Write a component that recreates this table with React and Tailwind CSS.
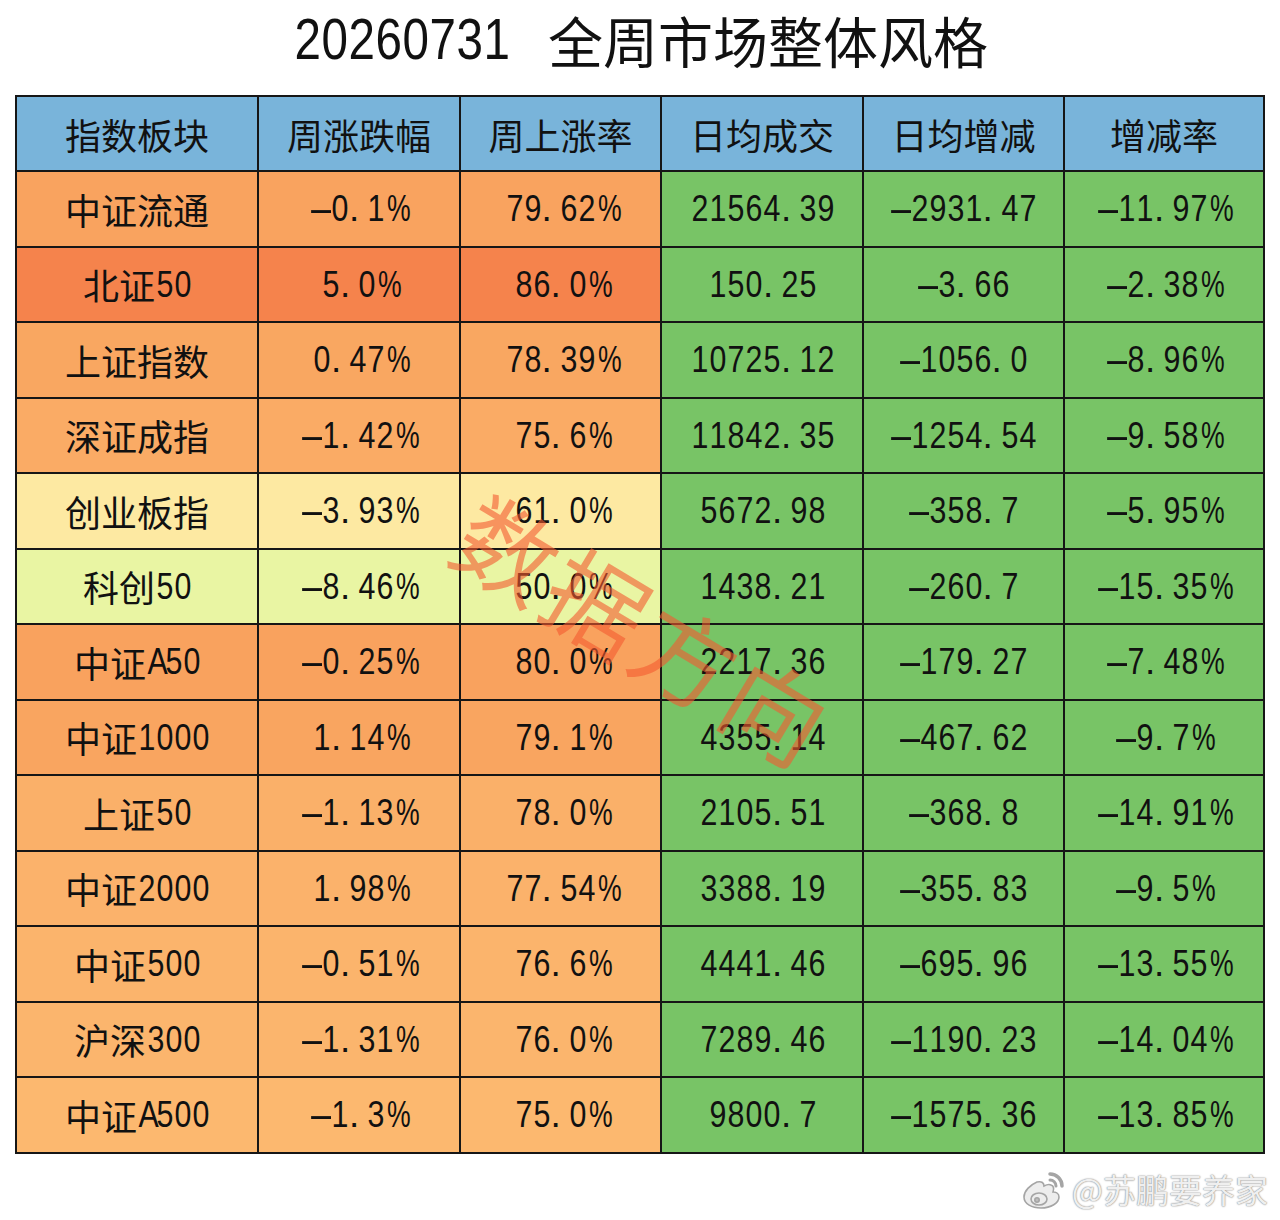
import React from 'react';

// --- table data ---
const rows = [
  { name: '中证流通', chg: '-0.1%', up: '79.62%', vol: '21564.39', diff: '-2931.47', rate: '-11.97%', bg: 'bg-[#f9a35f]' },
  { name: '北证50', chg: '5.0%', up: '86.0%', vol: '150.25', diff: '-3.66', rate: '-2.38%', bg: 'bg-[#f5834c]' },
  { name: '上证指数', chg: '0.47%', up: '78.39%', vol: '10725.12', diff: '-1056.0', rate: '-8.96%', bg: 'bg-[#f9a761]' },
  { name: '深证成指', chg: '-1.42%', up: '75.6%', vol: '11842.35', diff: '-1254.54', rate: '-9.58%', bg: 'bg-[#faab65]' },
  { name: '创业板指', chg: '-3.93%', up: '61.0%', vol: '5672.98', diff: '-358.7', rate: '-5.95%', bg: 'bg-[#fde9a2]' },
  { name: '科创50', chg: '-8.46%', up: '50.0%', vol: '1438.21', diff: '-260.7', rate: '-15.35%', bg: 'bg-[#e9f5a3]' },
  { name: '中证A50', chg: '-0.25%', up: '80.0%', vol: '2217.36', diff: '-179.27', rate: '-7.48%', bg: 'bg-[#f9a25e]' },
  { name: '中证1000', chg: '1.14%', up: '79.1%', vol: '4355.14', diff: '-467.62', rate: '-9.7%', bg: 'bg-[#f9a560]' },
  { name: '上证50', chg: '-1.13%', up: '78.0%', vol: '2105.51', diff: '-368.8', rate: '-14.91%', bg: 'bg-[#fab069]' },
  { name: '中证2000', chg: '1.98%', up: '77.54%', vol: '3388.19', diff: '-355.83', rate: '-9.5%', bg: 'bg-[#fbb26b]' },
  { name: '中证500', chg: '-0.51%', up: '76.6%', vol: '4441.46', diff: '-695.96', rate: '-13.55%', bg: 'bg-[#fbb46c]' },
  { name: '沪深300', chg: '-1.31%', up: '76.0%', vol: '7289.46', diff: '-1190.23', rate: '-14.04%', bg: 'bg-[#fbb56d]' },
  { name: '中证A500', chg: '-1.3%', up: '75.0%', vol: '9800.7', diff: '-1575.36', rate: '-13.85%', bg: 'bg-[#fcb86f]' },
];

const headers = ['指数板块', '周涨跌幅', '周上涨率', '日均成交', '日均增减', '增减率'];

// half-width latin glyphs like the original heiti font: fixed box, squeezed glyph
function Txt({ s }) {
  return s.split('').map((c, i) => {
    if (/[\u4e00-\u9fff]/.test(c)) return <span key={i}>{c}</span>;
    if (c === '.') return <span key={i} className="inline-block w-[18px] pl-[1px] text-left font-['Liberation_Sans',sans-serif] text-[37px]">.</span>;
    if (c === '-') return <span key={i} className="inline-block w-[18px] text-center font-['Liberation_Sans',sans-serif] text-[37px] scale-x-[2.2]">-</span>;
    if (c === '%') return <span key={i} className="inline-block w-[22px] text-center font-['Liberation_Sans',sans-serif] text-[37px] scale-x-[0.72]">%</span>;
    return <span key={i} className="inline-block w-[18px] text-center font-['Liberation_Sans',sans-serif] text-[37px] scale-x-[0.82]">{c}</span>;
  });
}

function Cell({ children, className }) {
  return (
    <div className={`flex items-center justify-center h-[73.5px] text-[36px] text-[#111] leading-none ${className}`}>
      {children}
    </div>
  );
}

function WeiboLogo() {
  return (
    <svg width="46" height="40" viewBox="0 0 46 40">
      <g fill="#ededed" stroke="#a5a5a5" strokeWidth="1.6">
        <path d="M17 12c-7 3-13 9-13 15 0 7 8 11 17 11 10 0 18-5 18-11 0-4-4-5-6-5 1-3 1-6-2-7-2-1-5 0-7 1 0-3-2-5-7-4z" />
        <ellipse cx="19" cy="29" rx="8" ry="6" />
        <circle cx="17" cy="30" r="2.2" fill="#bdbdbd" />
        <path d="M30 4a12 12 0 0 1 12 12" fill="none" strokeWidth="3.5" strokeLinecap="round" />
        <path d="M30 10a6 6 0 0 1 6 6" fill="none" strokeWidth="3" strokeLinecap="round" />
      </g>
    </svg>
  );
}

export default function App() {
  return (
    <div className="relative w-[1280px] h-[1220px] bg-white font-['Noto_Sans_CJK_SC',sans-serif] overflow-hidden">
      <div className="h-[95px] flex items-center justify-center pb-[17px] text-[55px] text-[#111] leading-none">
        <span className="flex">
          {'20260731'.split('').map((d, i) => (
            <span key={i} className="inline-block w-[27px] text-center font-['Liberation_Sans',sans-serif] text-[58px] scale-x-[0.82]">{d}</span>
          ))}
        </span>
        <span className="inline-block w-[40px]"></span>
        <span>全周市场整体风格</span>
      </div>

      <div className="mx-[15px] w-[1250px] grid grid-cols-[240px_200px_199px_200px_199px_198px] gap-[2px] p-[2px] bg-[#161616]">
        {headers.map(h => (
          <div key={h} className="flex items-center justify-center h-[73px] bg-[#79b4da] text-[36px] text-[#111] leading-none">
            {h}
          </div>
        ))}
        {rows.map(r => (
          <React.Fragment key={r.name}>
            <Cell className={r.bg}><Txt s={r.name} /></Cell>
            <Cell className={r.bg}><Txt s={r.chg} /></Cell>
            <Cell className={r.bg}><Txt s={r.up} /></Cell>
            <Cell className="bg-[#78c466]"><Txt s={r.vol} /></Cell>
            <Cell className="bg-[#78c466]"><Txt s={r.diff} /></Cell>
            <Cell className="bg-[#78c466]"><Txt s={r.rate} /></Cell>
          </React.Fragment>
        ))}
      </div>

      {/* weibo handle */}
      <div className="flex items-center justify-end gap-[6px] pr-[12px] mt-[16px]">
        <WeiboLogo />
        <span className="text-[33px] leading-none text-[#efefef] [text-shadow:0_0_1px_#8a8a8a,0_0_2px_#9a9a9a]">
          @苏鹏要养家
        </span>
      </div>

      {/* diagonal watermark */}
      <div className="absolute left-[645px] top-[628px] -translate-x-1/2 -translate-y-1/2 rotate-[31deg] whitespace-nowrap text-[100px] leading-none tracking-[4px] text-[rgba(244,90,48,0.6)] pointer-events-none">
        数据方向
      </div>
    </div>
  );
}
